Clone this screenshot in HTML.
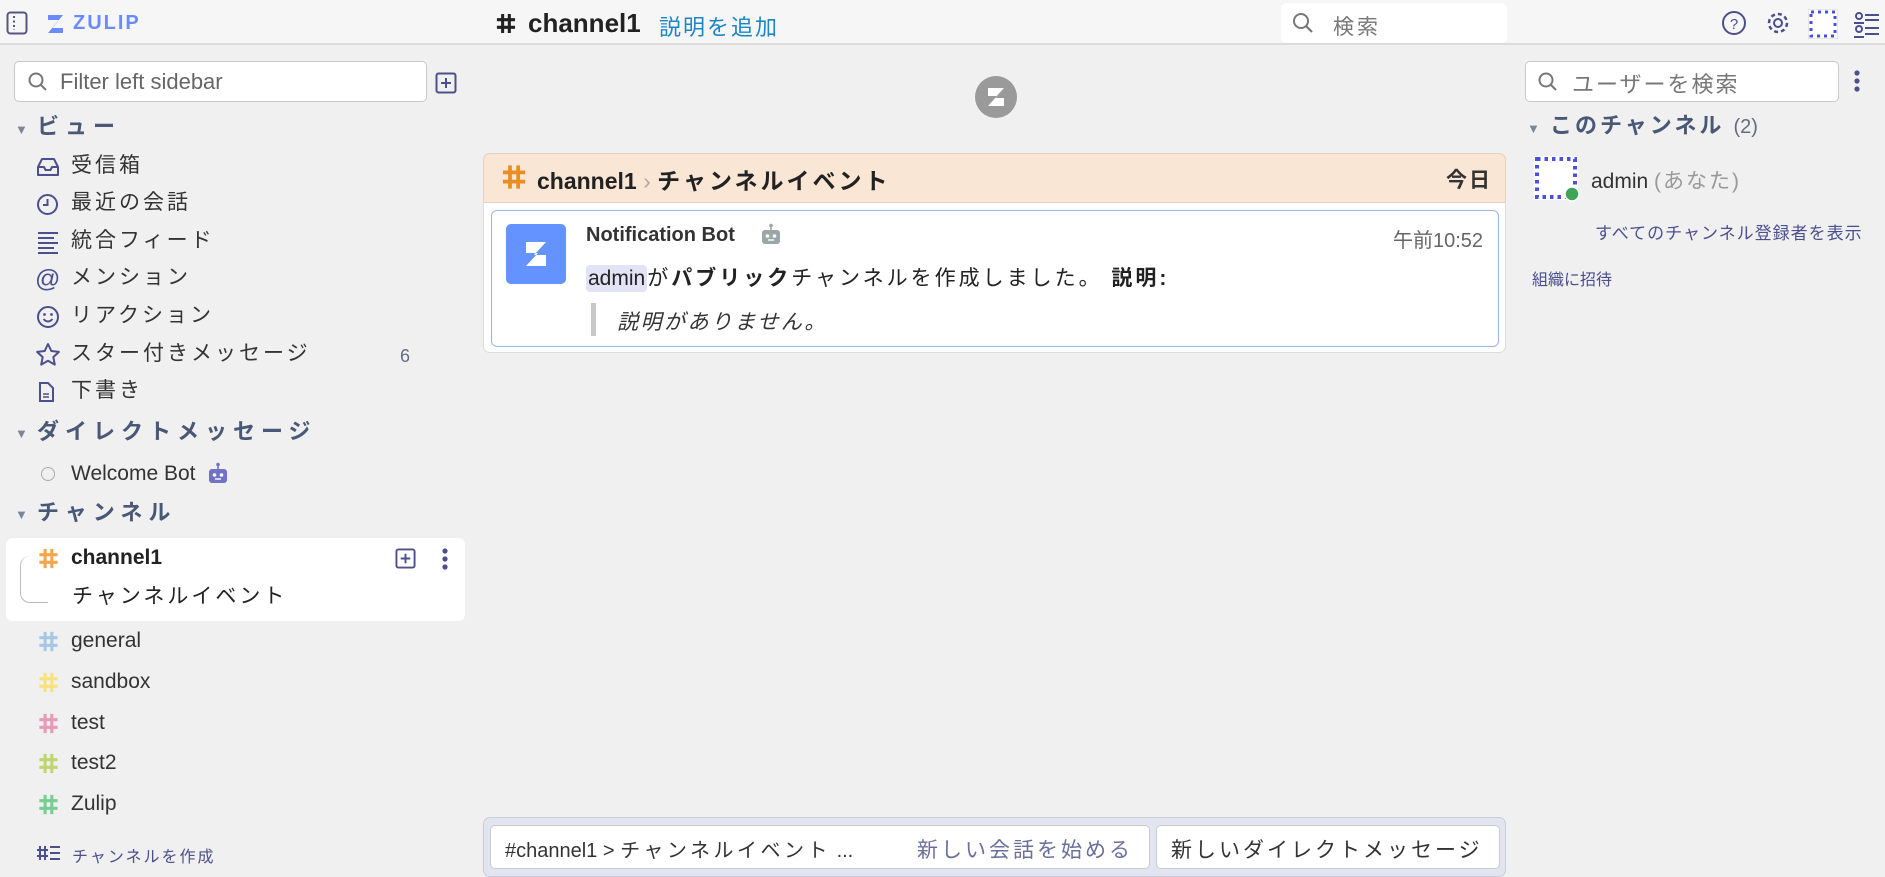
<!DOCTYPE html>
<html><head><meta charset="utf-8">
<style>
*{box-sizing:border-box;margin:0;padding:0}
body{width:1885px;height:873px;overflow:hidden;background:#f0f0f0;font-family:"Liberation Sans","Noto Sans CJK JP",sans-serif;color:#333;position:relative}
.a{position:absolute;white-space:nowrap}
.hdr{left:0;top:0;width:1885px;height:45px;background:#f6f6f6;border-bottom:2px solid #dcdcdc}
.item{font-size:21px;color:#333;line-height:1;letter-spacing:3px}
.sec{font-size:22px;font-weight:bold;color:#4a5877;line-height:1;letter-spacing:6px}
.tri{font-size:13px;color:#7b8698}
.lat{letter-spacing:0}
</style></head><body>
<svg width="0" height="0" style="position:absolute"><defs>
<symbol id="h" viewBox="0 0 22 24"><path d="M8 2v20M15 2v20M2 8h19M2 16h19" stroke="currentColor" stroke-width="3.2" fill="none"/></symbol>
<symbol id="bot" viewBox="0 0 22 22"><circle cx="11" cy="2.5" r="1.8" fill="currentColor"/><path d="M11 3v4" stroke="currentColor" stroke-width="1.6"/><rect x="2" y="7" width="18" height="14" rx="3" fill="currentColor"/><circle cx="7.5" cy="13" r="1.8" fill="#fff"/><circle cx="14.5" cy="13" r="1.8" fill="#fff"/><path d="M8 17h6" stroke="#fff" stroke-width="1.4"/></symbol>
</defs></svg>
<div class="a hdr"></div>
<!-- header left -->
<svg class="a" style="left:6px;top:11px" width="22" height="24" viewBox="0 0 22 24"><rect x="1.5" y="1.5" width="19" height="21" rx="3" fill="none" stroke="#55577f" stroke-width="2"/><line x1="8" y1="5" x2="8" y2="19" stroke="#55577f" stroke-width="2" stroke-dasharray="2 2.5"/></svg>
<svg class="a" style="left:45px;top:13px" width="21" height="22" viewBox="0 0 21 22"><path d="M3 2h15l-11 13h11v5H3l11-13H3z" fill="#6a8bff"/></svg>
<div class="a" style="left:73px;top:12px;font-size:20px;font-weight:bold;color:#6a8bff;letter-spacing:2px">ZULIP</div>
<svg class="a" style="left:495px;top:12px;color:#222" width="21" height="23"><use href="#h"/></svg>
<div class="a" style="left:528px;top:8px;font-size:26px;font-weight:bold;color:#222">channel1</div>
<div class="a" style="left:659px;top:10px;font-size:22px;color:#1a86c5;letter-spacing:2px">説明を追加</div>
<div class="a" style="left:1281px;top:3px;width:226px;height:40px;background:#fff;border-radius:6px"></div>
<svg class="a" style="left:1292px;top:12px" width="22" height="22" viewBox="0 0 22 22"><circle cx="9" cy="9" r="7" fill="none" stroke="#777" stroke-width="2"/><line x1="14" y1="14" x2="20" y2="20" stroke="#777" stroke-width="2.2"/></svg>
<div class="a" style="left:1333px;top:11px;font-size:21px;color:#777;letter-spacing:3px">検索</div>
<svg class="a" style="left:1721px;top:10px" width="26" height="26" viewBox="0 0 26 26"><circle cx="13" cy="13" r="11" fill="none" stroke="#4c4f8e" stroke-width="2"/><text x="13" y="19" font-size="15" text-anchor="middle" fill="#4c4f8e" font-family="Liberation Sans">?</text></svg>
<svg class="a" style="left:1765px;top:10px" width="26" height="26" viewBox="0 0 26 26"><circle cx="13" cy="13" r="4" fill="none" stroke="#4c4f8e" stroke-width="2"/><circle cx="13" cy="13" r="9" fill="none" stroke="#4c4f8e" stroke-width="2.5" stroke-dasharray="4 3"/></svg>
<svg class="a" style="left:1808px;top:9px" width="30" height="30" viewBox="0 0 30 30"><rect x="0" y="0" width="30" height="30" fill="#fff" stroke="#ccc"/><rect x="3" y="3" width="24" height="24" fill="none" stroke="#4b4fe0" stroke-width="3" stroke-dasharray="3 4"/></svg>
<svg class="a" style="left:1853px;top:10px" width="28" height="28" viewBox="0 0 28 28"><circle cx="6" cy="6" r="3" fill="none" stroke="#4c4f8e" stroke-width="2"/><circle cx="6" cy="19" r="3" fill="none" stroke="#4c4f8e" stroke-width="2"/><path d="M12 5h14M12 10h14M12 18h14M12 24h14M1 13h10M1 27h10" stroke="#4c4f8e" stroke-width="2"/></svg>

<!-- left sidebar -->
<div class="a" style="left:14px;top:61px;width:413px;height:41px;background:#fff;border:1px solid #c8c8c8;border-radius:5px"></div>
<svg class="a" style="left:27px;top:71px" width="22" height="22" viewBox="0 0 22 22"><circle cx="9" cy="9" r="6.5" fill="none" stroke="#777" stroke-width="2"/><line x1="14" y1="14" x2="19" y2="19" stroke="#777" stroke-width="2"/></svg>
<div class="a" style="left:60px;top:69px;font-size:22px;color:#666">Filter left sidebar</div>
<svg class="a" style="left:435px;top:72px" width="22" height="22" viewBox="0 0 22 22"><rect x="1.5" y="1.5" width="19" height="19" rx="2" fill="none" stroke="#4c4f8e" stroke-width="2"/><path d="M11 6v10M6 11h10" stroke="#4c4f8e" stroke-width="2"/></svg>

<div class="a tri" style="left:15px;top:122px">▼</div><div class="a sec" style="left:37px;top:116px">ビュー</div>
<svg class="a" style="left:36px;top:157px" width="24" height="20" viewBox="0 0 24 20"><path d="M2 10l4-8h12l4 8v8H2z M2 10h6l1.5 3h5l1.5-3h6" fill="none" stroke="#4c4f8e" stroke-width="2" stroke-linejoin="round"/></svg>
<div class="a item" style="left:71px;top:155px">受信箱</div>
<svg class="a" style="left:36px;top:193px" width="23" height="23" viewBox="0 0 23 23"><circle cx="11.5" cy="11.5" r="9.5" fill="none" stroke="#4c4f8e" stroke-width="2"/><path d="M11.5 6v6H7" fill="none" stroke="#4c4f8e" stroke-width="2"/></svg>
<div class="a item" style="left:71px;top:192px">最近の会話</div>
<svg class="a" style="left:37px;top:231px" width="22" height="23" viewBox="0 0 22 23"><path d="M1 2h20M1 7h16M1 12h20M1 17h16M1 22h20" stroke="#4c4f8e" stroke-width="2"/></svg>
<div class="a item" style="left:71px;top:230px">統合フィード</div>
<div class="a" style="left:35px;top:265px;font-size:25px;color:#4c4f8e">@</div><div class="a item" style="left:71px;top:267px">メンション</div>
<svg class="a" style="left:36px;top:305px" width="24" height="24" viewBox="0 0 24 24"><circle cx="12" cy="12" r="10" fill="none" stroke="#4c4f8e" stroke-width="2"/><circle cx="8.5" cy="9.5" r="1.4" fill="#4c4f8e"/><circle cx="15.5" cy="9.5" r="1.4" fill="#4c4f8e"/><path d="M7.5 14q4.5 5 9 0" fill="none" stroke="#4c4f8e" stroke-width="2"/></svg>
<div class="a item" style="left:71px;top:305px">リアクション</div>
<svg class="a" style="left:35px;top:342px" width="26" height="25" viewBox="0 0 26 25"><path d="M13 2l3.3 7 7.6.9-5.6 5.2 1.5 7.5L13 18.8l-6.8 3.8 1.5-7.5L2.1 9.9 9.7 9z" fill="none" stroke="#4c4f8e" stroke-width="2" stroke-linejoin="round"/></svg>
<div class="a item" style="left:71px;top:343px">スター付きメッセージ</div>
<div class="a" style="left:400px;top:346px;font-size:18px;color:#666a90">6</div>
<svg class="a" style="left:38px;top:382px" width="16" height="20" viewBox="0 0 16 20"><path d="M2 1h8l5 5v13H2z" fill="none" stroke="#4c4f8e" stroke-width="2"/><path d="M5 12h6M5 15h6" stroke="#4c4f8e" stroke-width="1.5"/></svg><div class="a item" style="left:71px;top:380px">下書き</div>

<div class="a tri" style="left:15px;top:426px">▼</div><div class="a sec" style="left:37px;top:421px">ダイレクトメッセージ</div>
<div class="a" style="left:41px;top:467px;width:14px;height:14px;border:1.5px solid #aaa;border-radius:50%"></div>
<div class="a item lat" style="left:71px;top:463px">Welcome Bot</div>
<svg class="a" style="left:207px;top:462px;color:#7272c4" width="22" height="22"><use href="#bot"/></svg>
<div class="a tri" style="left:15px;top:507px">▼</div><div class="a sec" style="left:37px;top:502px">チャンネル</div>

<div class="a" style="left:6px;top:538px;width:459px;height:83px;background:#fff;border-radius:7px"></div>
<div class="a" style="left:20px;top:556px;width:28px;height:47px;border-left:1px solid #bbb;border-bottom:1px solid #bbb;border-radius:10px 0 0 10px"></div>
<svg class="a" style="left:37px;top:547px;color:#f5a64a" width="22" height="23"><use href="#h"/></svg>
<div class="a item lat" style="left:71px;top:547px;font-weight:bold;color:#222">channel1</div>
<svg class="a" style="left:395px;top:548px" width="21" height="21" viewBox="0 0 22 22"><rect x="1.5" y="1.5" width="19" height="19" rx="2" fill="none" stroke="#4c4f8e" stroke-width="2"/><path d="M11 6v10M6 11h10" stroke="#4c4f8e" stroke-width="2"/></svg>
<svg class="a" style="left:441px;top:547px" width="8" height="24" viewBox="0 0 8 24"><circle cx="4" cy="4" r="2.6" fill="#4c4f8e"/><circle cx="4" cy="12" r="2.6" fill="#4c4f8e"/><circle cx="4" cy="20" r="2.6" fill="#4c4f8e"/></svg>
<div class="a item" style="left:72px;top:586px;color:#222">チャンネルイベント</div>

<svg class="a" style="left:37px;top:630px;color:#a6c7e5" width="22" height="23"><use href="#h"/></svg><div class="a item lat" style="left:71px;top:630px">general</div>
<svg class="a" style="left:37px;top:671px;color:#f9e27e" width="22" height="23"><use href="#h"/></svg><div class="a item lat" style="left:71px;top:671px">sandbox</div>
<svg class="a" style="left:37px;top:712px;color:#e79ab5" width="22" height="23"><use href="#h"/></svg><div class="a item lat" style="left:71px;top:712px">test</div>
<svg class="a" style="left:37px;top:752px;color:#bfd56f" width="22" height="23"><use href="#h"/></svg><div class="a item lat" style="left:71px;top:752px">test2</div>
<svg class="a" style="left:37px;top:793px;color:#76ce90" width="22" height="23"><use href="#h"/></svg><div class="a item lat" style="left:71px;top:793px">Zulip</div>
<svg class="a" style="left:37px;top:845px" width="24" height="16" viewBox="0 0 24 16"><path d="M3 1v14M8 1v14M0 5h11M0 11h11M13 2h10M13 8h10M13 14h10" stroke="#4c4f8e" stroke-width="2"/></svg>
<div class="a" style="left:72px;top:843px;font-size:16px;color:#4c4f8e;letter-spacing:2px">チャンネルを作成</div>

<!-- center -->
<svg class="a" style="left:975px;top:76px" width="42" height="42" viewBox="0 0 42 42"><circle cx="21" cy="21" r="21" fill="#9a9a9a"/><path d="M13 12h16l-9 10h9v8H13l9-10h-9z" fill="#fff"/></svg>
<div class="a" style="left:483px;top:153px;width:1023px;height:200px;background:#fff;border:1px solid #ddd;border-radius:7px"></div>
<div class="a" style="left:483px;top:153px;width:1023px;height:50px;background:#f9e6d4;border:1px solid #e6d2bf;border-radius:7px 7px 0 0"></div>
<svg class="a" style="left:500px;top:163px;color:#e98e1f" width="27" height="28"><use href="#h"/></svg>
<div class="a" style="left:537px;top:162px;font-size:23px;font-weight:bold;color:#222">channel1 <span style="color:#aaa;font-weight:normal">›</span> <span style="letter-spacing:3px">チャンネルイベント</span></div>
<div class="a" style="left:1446px;top:164px;font-size:21px;font-weight:bold;color:#333;letter-spacing:2px">今日</div>
<div class="a" style="left:491px;top:210px;width:1008px;height:137px;border:1px solid #9bb5e6;border-radius:6px;background:#fff"></div>
<svg class="a" style="left:506px;top:224px" width="60" height="60" viewBox="0 0 60 60"><rect width="60" height="60" rx="5" fill="#6492fe"/><path d="M20 18h20l-12 13h12v11H20l12-13H20z" fill="#fff"/></svg>
<div class="a" style="left:586px;top:224px;font-size:20px;font-weight:bold;color:#333">Notification Bot</div>
<svg class="a" style="left:760px;top:223px;color:#9aa6a8" width="22" height="22"><use href="#bot"/></svg>
<div class="a" style="left:1393px;top:224px;font-size:20px;color:#666">午前10:52</div>
<div class="a" style="left:586px;top:262px;font-size:21px;color:#222;letter-spacing:3px"><span style="background:#e2e3f5;border-radius:4px;padding:2px 2px;letter-spacing:0">admin</span>が<b>パブリック</b>チャンネルを作成しました。 <b>説明:</b></div>
<div class="a" style="left:591px;top:303px;width:5px;height:33px;background:#c8c8c8"></div>
<div class="a" style="left:617px;top:306px;font-size:21px;font-style:italic;color:#333;letter-spacing:2.5px">説明がありません。</div>

<!-- compose -->
<div class="a" style="left:483px;top:817px;width:1023px;height:60px;background:#e2e4ef;border:1px solid #ccd;border-radius:7px"></div>
<div class="a" style="left:490px;top:825px;width:660px;height:44px;background:#fff;border:1px solid #ccc;border-radius:5px"></div>
<div class="a" style="left:505px;top:834px;font-size:20px;color:#333">#channel1 &gt; <span style="letter-spacing:3.5px">チャンネルイベント</span> ...</div>
<div class="a" style="left:917px;top:834px;font-size:21px;color:#6a6f9c;letter-spacing:3px">新しい会話を始める</div>
<div class="a" style="left:1156px;top:825px;width:344px;height:44px;background:#fff;border:1px solid #ccc;border-radius:5px"></div>
<div class="a" style="left:1171px;top:834px;font-size:21px;color:#333;letter-spacing:3px">新しいダイレクトメッセージ</div>

<!-- right sidebar -->
<div class="a" style="left:1525px;top:61px;width:314px;height:41px;background:#fff;border:1px solid #c8c8c8;border-radius:5px"></div>
<svg class="a" style="left:1537px;top:71px" width="22" height="22" viewBox="0 0 22 22"><circle cx="9" cy="9" r="6.5" fill="none" stroke="#777" stroke-width="2"/><line x1="14" y1="14" x2="19" y2="19" stroke="#777" stroke-width="2"/></svg>
<div class="a" style="left:1572px;top:67px;font-size:22px;color:#777;letter-spacing:2px">ユーザーを検索</div>
<svg class="a" style="left:1853px;top:69px" width="8" height="24" viewBox="0 0 8 24"><circle cx="4" cy="4" r="2.6" fill="#4c4f8e"/><circle cx="4" cy="12" r="2.6" fill="#4c4f8e"/><circle cx="4" cy="20" r="2.6" fill="#4c4f8e"/></svg>
<div class="a tri" style="left:1527px;top:121px">▼</div>
<div class="a sec" style="left:1550px;top:115px;letter-spacing:3px">このチャンネル <span style="font-weight:normal;color:#666a7a;font-size:20px;letter-spacing:0">(2)</span></div>
<svg class="a" style="left:1534px;top:156px" width="48" height="48" viewBox="0 0 48 48"><rect x="0" y="0" width="44" height="44" fill="#fff"/><rect x="3" y="3" width="38" height="38" fill="none" stroke="#4b4fe0" stroke-width="4" stroke-dasharray="3.5 4"/><circle cx="38" cy="38" r="7" fill="#3fa45a" stroke="#fff" stroke-width="1.5"/></svg>
<div class="a" style="left:1591px;top:165px;font-size:21px;color:#333">admin <span style="color:#999;letter-spacing:2px">(あなた)</span></div>
<div class="a" style="left:1595px;top:219px;font-size:17px;color:#4c4f8e;letter-spacing:1px">すべてのチャンネル登録者を表示</div>
<div class="a" style="left:1532px;top:266px;font-size:16px;color:#4c4f8e">組織に招待</div>
</body></html>
